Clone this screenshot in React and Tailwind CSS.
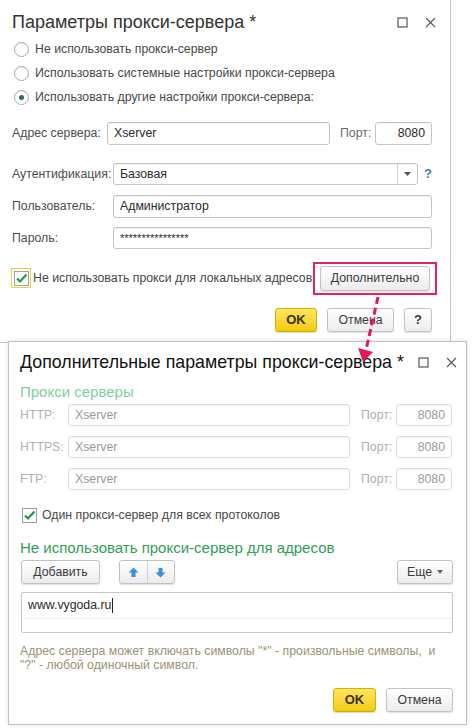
import React from 'react';

// Small helpers for the 1C-style dialog controls
const Field = ({ value, className = '', disabled = false, right = false }) => (
  <div
    className={`flex items-center rounded-[3px] border px-[6px] text-[12.3px] shadow-[inset_0_1px_1px_rgba(0,0,0,0.06)] ${
      disabled ? 'border-[#dcdcdc] text-[#9a9a9a]' : 'border-[#c4c4c4] text-[#2a2a2a]'
    } ${right ? 'justify-end' : ''} ${className}`}
  >
    {value}
  </div>
);

const Button = ({ children, className = '' }) => (
  <div
    className={`flex items-center justify-center rounded-[3px] border border-[#c2c2c2] bg-gradient-to-b from-white to-[#ececec] text-[12.3px] text-[#3a3a3a] shadow-[0_1px_1px_rgba(0,0,0,0.12)] ${className}`}
  >
    {children}
  </div>
);

const OkButton = ({ className = '' }) => (
  <div
    className={`flex items-center justify-center rounded-[3px] border border-[#d4b100] bg-gradient-to-b from-[#ffe65a] to-[#f3cb00] text-[13px] font-bold text-[#3b3200] shadow-[0_1px_1px_rgba(0,0,0,0.15)] ${className}`}
  >
    OK
  </div>
);

const WindowIcons = () => (
  <div className="flex items-center gap-[17px]">
    <svg width="11" height="11" viewBox="0 0 11 11">
      <rect x="1" y="1" width="9" height="9" fill="none" stroke="#555" strokeWidth="1.2" />
    </svg>
    <svg width="11" height="11" viewBox="0 0 11 11">
      <path d="M1 1 L10 10 M10 1 L1 10" stroke="#555" strokeWidth="1.1" />
    </svg>
  </div>
);

const Radio = ({ checked, label }) => (
  <div className="flex h-[24px] items-center gap-[6px]">
    <div className="flex h-[15px] w-[15px] items-center justify-center rounded-full border border-[#a9a9a9] bg-white shadow-[inset_0_1px_1px_rgba(0,0,0,0.08)]">
      {checked && <div className="h-[5px] w-[5px] rounded-full bg-[#2f6b44]" />}
    </div>
    <span className="text-[12.3px] text-[#474747]">{label}</span>
  </div>
);

const Check = () => (
  <div className="flex h-[15px] w-[15px] items-center justify-center border border-[#9f9f9f] bg-white">
    <svg width="13" height="13" viewBox="0 0 13 13">
      <path d="M2 6.5 L5 9.5 L11.5 2.5" fill="none" stroke="#1f9a45" strokeWidth="2.2" />
    </svg>
  </div>
);

export default function App() {
  return (
    <div className="relative h-[728px] w-[474px] overflow-hidden bg-white font-['Liberation_Sans',Arial,sans-serif]">
      {/* Proxy settings window */}
      <div className="flex h-[343px] w-[451px] flex-col border-b border-r border-[#c6c6c6] pl-3 pr-[18px]">
        <div className="flex h-[37px] items-center justify-between pt-[7px]">
          <span className="text-[18px] text-[#333]">Параметры прокси-сервера *</span>
          <div className="-mr-[4px]">
            <WindowIcons />
          </div>
        </div>
        <div className="pl-[2px]">
          <Radio label="Не использовать прокси-сервер" />
          <Radio label="Использовать системные настройки прокси-сервера" />
          <Radio checked label="Использовать другие настройки прокси-сервера:" />
        </div>

        <div className="mt-[13px] flex h-[23px] items-center">
          <span className="w-[95px] text-[12.3px] text-[#4d4d4d]">Адрес сервера:</span>
          <Field value="Xserver" className="h-full w-[223px]" />
          <span className="ml-[10px] w-[35px] text-[12.3px] text-[#6b6b6b]">Порт:</span>
          <Field value="8080" right className="h-full w-[57px]" />
        </div>

        <div className="mt-[18px] flex h-[22px] items-center">
          <span className="w-[101px] text-[12.3px] text-[#4d4d4d]">Аутентификация:</span>
          <div className="flex h-full w-[305px] rounded-[3px] border border-[#c4c4c4] shadow-[inset_0_1px_1px_rgba(0,0,0,0.06)]">
            <span className="flex flex-1 items-center px-[6px] text-[12.3px] text-[#2a2a2a]">Базовая</span>
            <div className="flex w-[20px] items-center justify-center border-l border-[#d0d0d0]">
              <svg width="7" height="4" viewBox="0 0 7 4">
                <path d="M0 0 L7 0 L3.5 4 Z" fill="#555" />
              </svg>
            </div>
          </div>
          <span className="ml-[6px] text-[13px] font-bold text-[#3b82c8]">?</span>
        </div>

        <div className="mt-[10px] flex h-[23px] items-center">
          <span className="w-[101px] text-[12.3px] text-[#4d4d4d]">Пользователь:</span>
          <Field value="Администратор" className="h-full flex-1" />
        </div>

        <div className="mt-[9px] flex h-[22px] items-center">
          <span className="w-[101px] text-[12.3px] text-[#4d4d4d]">Пароль:</span>
          <Field value="****************" className="h-full flex-1 !text-[11px]" />
        </div>

        <div className="mt-[11px] flex h-[36px] items-center">
          <div className="-ml-[1px] flex h-[20px] w-[20px] items-center justify-center border border-[#f0cf3a]">
            <Check />
          </div>
          <span className="ml-[2px] flex-1 whitespace-nowrap text-[12.3px] text-[#474747]">
            Не использовать прокси для локальных адресов
          </span>
          <div className="-mr-[5px] border-2 border-[#e3245b] px-[5px] py-[2px]">
            <Button className="h-[25px] w-[110px]">Дополнительно</Button>
          </div>
        </div>

        <div className="mt-[12px] flex h-[24px] items-center justify-end gap-[10px]">
          <OkButton className="h-full w-[42px]" />
          <Button className="h-full w-[67px]">Отмена</Button>
          <Button className="h-full w-[28px] !text-[13px] font-bold">?</Button>
        </div>
      </div>

      {/* Additional parameters window */}
      <div className="relative -mt-[2px] ml-2 flex h-[384px] w-[459px] flex-col border border-[#c2c2c2] bg-white pl-[11px] pr-[13px] shadow-[0_0_4px_rgba(0,0,0,0.12)]">
        <div className="flex h-[40px] items-center justify-between">
          <span className="text-[17.8px] text-[#111]">Дополнительные параметры прокси-сервера *</span>
          <div className="-mr-[4px]">
            <WindowIcons />
          </div>
        </div>
        <div className="flex h-[20px] items-center text-[15px] text-[#7fcf9c]">Прокси серверы</div>

        {['HTTP:', 'HTTPS:', 'FTP:'].map((p, i) => (
          <div key={p} className={`flex h-[22px] items-center ${i === 0 ? 'mt-[2px]' : 'mt-[10px]'}`}>
            <span className="w-[48px] text-[12.3px] text-[#b0b0b0]">{p}</span>
            <Field value="Xserver" disabled className="h-full w-[282px]" />
            <span className="ml-[11px] w-[35px] text-[12.3px] text-[#b0b0b0]">Порт:</span>
            <Field value="8080" disabled right className="h-full w-[56px]" />
          </div>
        ))}

        <div className="mt-[15px] flex h-[20px] items-center gap-[5px] pl-[2px]">
          <Check />
          <span className="text-[12.3px] text-[#474747]">Один прокси-сервер для всех протоколов</span>
        </div>

        <div className="mt-[13px] flex h-[20px] items-center text-[15px] text-[#2f9e55]">
          Не использовать прокси-сервер для адресов
        </div>

        <div className="mt-[2px] flex h-[24px] items-center pl-[1px]">
          <Button className="h-full w-[79px]">Добавить</Button>
          <div className="ml-[19px] flex h-full w-[56px] rounded-[3px] border border-[#c2c2c2] bg-gradient-to-b from-white to-[#ececec] shadow-[0_1px_1px_rgba(0,0,0,0.12)]">
            <div className="flex flex-1 items-center justify-center border-r border-[#cfcfcf]">
              <svg width="11" height="11" viewBox="0 0 11 11">
                <path d="M5.5 0.5 L10.5 5.5 L7.5 5.5 L7.5 10 L3.5 10 L3.5 5.5 L0.5 5.5 Z" fill="#3d8fd9" />
              </svg>
            </div>
            <div className="flex flex-1 items-center justify-center">
              <svg width="11" height="11" viewBox="0 0 11 11">
                <path d="M5.5 10.5 L10.5 5.5 L7.5 5.5 L7.5 1 L3.5 1 L3.5 5.5 L0.5 5.5 Z" fill="#3d8fd9" />
              </svg>
            </div>
          </div>
          <Button className="ml-auto h-full w-[56px] gap-[5px]">
            <span>Еще</span>
            <svg width="6" height="4" viewBox="0 0 6 4">
              <path d="M0 0 L6 0 L3 4 Z" fill="#666" />
            </svg>
          </Button>
        </div>

        <div className="ml-[1px] mt-[8px] flex h-[41px] flex-col rounded-[2px] border border-[#c4c4c4]">
          <div className="flex h-[26px] items-center border-b border-[#eeeeee] px-[6px] text-[12.3px] text-[#2a2a2a]">
            www.vygoda.ru<span className="ml-[1px] inline-block h-[15px] w-[1px] bg-[#222]" />
          </div>
        </div>

        <p className="mt-[11px] whitespace-nowrap text-[12.3px] leading-[14px] text-[#9a9274]">
          Адрес сервера может включать символы "*" - произвольные символы,&nbsp; и
          <br />
          "?" - любой одиночный символ.
        </p>

        <div className="mt-[16px] flex h-[24px] items-center justify-end gap-[10px]">
          <OkButton className="h-full w-[43px]" />
          <Button className="h-full w-[67px]">Отмена</Button>
        </div>
      </div>

      {/* Dashed callout arrow */}
      <svg className="pointer-events-none absolute left-0 top-0" width="474" height="728">
        <path d="M378 297 L366 350" stroke="#e5175c" strokeWidth="3" strokeDasharray="7 4" fill="none" />
        <path d="M358 348 L373 352 L363 362 Z" fill="#e5175c" />
      </svg>
    </div>
  );
}
